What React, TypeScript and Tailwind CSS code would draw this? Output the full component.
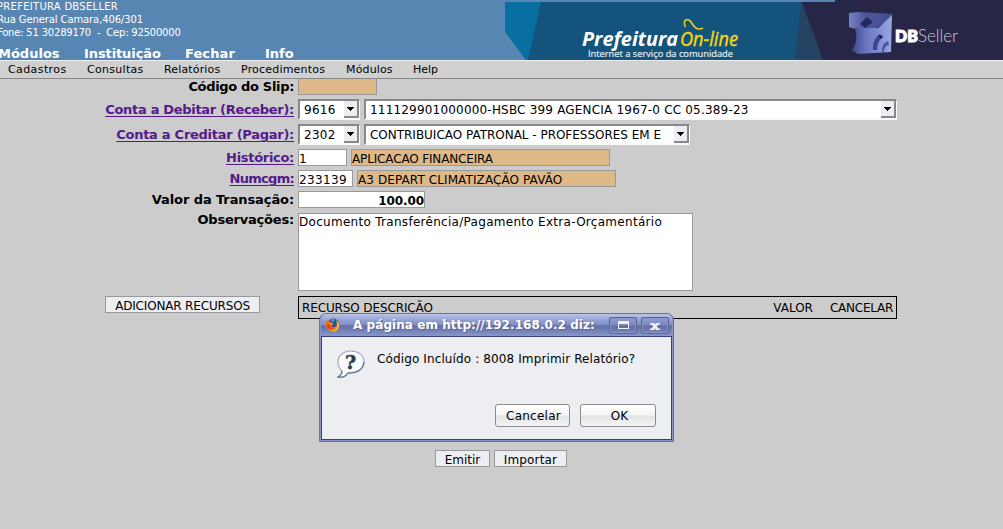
import type { ReactNode } from "react";

const field = "h-[17px] border border-[#999] text-[12px] leading-[19px] whitespace-pre overflow-hidden";
const button = "flex h-[17px] items-center justify-center border border-[#999] bg-[#edeef2] pt-[3px] text-[12px] leading-[15px] whitespace-nowrap";

function Row({ label, link, className, labelClass, children }: { label: string; link?: boolean; className: string; labelClass: string; children: ReactNode }) {
  return (
    <div className={`flex gap-1 ${className}`}>
      <div className={`w-[294px] shrink-0 text-right text-[13px] font-bold leading-[17px] whitespace-nowrap ${labelClass}`}>
        {link ? <a className="text-[#551a8b] underline decoration-1 underline-offset-2">{label}</a> : label}
      </div>
      {children}
    </div>
  );
}

function Select({ value, className }: { value: string; className: string }) {
  return (
    <div className={`flex h-[21px] justify-between border border-t-2 border-l-2 border-b-2 border-t-[#888] border-l-[#888] border-r-[#fafafa] border-b-[#fafafa] bg-white pl-1 text-[12px] leading-[18px] ${className}`}>
      <span className="whitespace-nowrap">{value}</span>
      <div className="flex h-[17px] w-[15px] shrink-0 items-center justify-center border-r-2 border-b-2 border-[#888] bg-[#ebedf2]">
        <svg width="7" height="4" viewBox="0 0 7 4" shapeRendering="crispEdges"><path d="M0 0h7v1H6v1H5v1H4v1H3V3H2V2H1V1H0z" /></svg>
      </div>
    </div>
  );
}

function Header() {
  return (
    <header className="relative h-[60px] overflow-hidden bg-[#5786b2] text-white">
      <div className="-ml-[3px] whitespace-pre text-[10px] leading-[13px]">
        <div className="tracking-[0.28px]">PREFEITURA DBSELLER</div>
        <div className="tracking-[-0.1px]">Rua General Camara,406/301</div>
        <div className="tracking-[-0.2px]">Fone: 51 30289170  -  Cep: 92500000</div>
      </div>
      <nav className="mt-[6px] -ml-[2px] flex text-[13px] font-bold leading-[17px]">
        <span className="w-[86px]">Módulos</span>
        <span className="w-[101px] tracking-[-0.1px]">Instituição</span>
        <span className="w-[80px] tracking-[0.1px]">Fechar</span>
        <span>Info</span>
      </nav>
      <svg className="absolute top-0 right-0" width="498" height="60" viewBox="505 0 498 60">
        <defs>
          <linearGradient id="top" x1="0" y1="0" x2="1" y2="0">
            <stop offset="0" stopColor="#7781c4" /><stop offset=".35" stopColor="#4d579d" /><stop offset="1" stopColor="#434b8c" />
          </linearGradient>
          <linearGradient id="base" x1="0" y1="0" x2="1" y2="0">
            <stop offset="0" stopColor="#3c4688" /><stop offset=".35" stopColor="#6975c2" /><stop offset="1" stopColor="#98a6e6" />
          </linearGradient>
        </defs>
        <path d="M505 2H835V0H1003V60H526L505 31z" fill="#14547c" />
        <path d="M505 2H541L528 60H526L505 31z" fill="#086fa0" />
        <path d="M802 2H835V0H1003V60H795z" fill="#282647" />
        <path d="M802 2L823 60H795z" fill="#254463" />
        <g fontFamily="'Open Sans', sans-serif">
          <text x="582" y="45.5" fontSize="19.5" fontWeight="700" fontStyle="italic" fill="white" textLength="96" lengthAdjust="spacingAndGlyphs">Prefeitura</text>
          <text x="680" y="45.5" fontSize="19.5" fontStyle="italic" fill="#f4d80b" stroke="#f4d80b" strokeWidth=".4" textLength="58" lengthAdjust="spacingAndGlyphs">On-line</text>
          <text x="588" y="56.5" fontSize="9.8" fill="#e3edf4" stroke="#e3edf4" strokeWidth=".2" textLength="145" lengthAdjust="spacingAndGlyphs">Internet a serviço da comunidade</text>
        </g>
        <path d="M685.5 27C682 20 688 17 691 22S697 31 703 28" fill="none" stroke="#e9d313" strokeWidth="1.6" />
        <path d="M849 13L857 12L893 14L889 18L874 30L855 29L849 27z" fill="url(#top)" />
        <path d="M855 28Q859 41 852 50L858 54L891 52L892 15L878 28z" fill="url(#base)" />
        <path d="M867 17L873 22L865 28L860 24z" fill="#252763" />
        <path d="M873 50Q872 39 880 34L883 37Q877 41 877 50z" fill="#3c458f" />
        <path d="M878 35l5 1l-2 3z" fill="#1d1c50" />
        <path d="M882 52Q881 44 888 41L889 45Q884 46 884 52z" fill="#4d57a3" />
        <text x="895" y="41.5" fontSize="17.5" fontWeight="800" fill="white" stroke="white" strokeWidth=".9" fontFamily="Lato, sans-serif" textLength="23" lengthAdjust="spacingAndGlyphs">DB</text>
        <text x="918" y="41.5" fontSize="18" fontWeight="300" fill="#c7c6d4" fontFamily="Lato, sans-serif" textLength="40" lengthAdjust="spacingAndGlyphs">Seller</text>
      </svg>
    </header>
  );
}

function Dialog() {
  const action = "flex h-[23px] items-center justify-center rounded-[3px] border border-[#8c8c8c] bg-[linear-gradient(#fff,#f4f4f4_48%,#e3e3e3_52%,#f4f4f4)] text-[12px]";
  const control = "flex h-[17px] w-[28px] items-center justify-center rounded-[2px] border border-[#5c6594] bg-[linear-gradient(#8d9bd0,#7c8abf_45%,#606da5_55%,#7886bb)] shadow-[inset_0_0_0_1px_#8794c4]";
  return (
    <div role="dialog" className="absolute top-[313px] left-[319px] flex h-[129px] w-[355px] flex-col rounded-t-[7px] border border-[#6970ad] bg-[#8793c9] px-px pb-px">
      <div className="flex h-[22px] items-center rounded-t-[5px] bg-[linear-gradient(#bac5e8,#8b99cd_35%,#8896ca_45%,#606fa8_55%,#8997c8)] pl-[5px] text-[12px] font-bold text-white [text-shadow:1px_1px_0_#5d6796]">
        <svg width="14" height="14" viewBox="0 0 14 14">
          <circle cx="7" cy="7" r="6.5" fill="#e57816" />
          <circle cx="7.5" cy="5.5" r="5" fill="#254f91" />
          <path d="M6 1Q8 0 9 2L7 4L5 3z" fill="#4e9bd4" />
          <path d="M1 2L3 4Q5 3 6 5L8 6L5 8Q8 11 11 7L11 3Q15 8 11 12T2 11T1 2" fill="#f27c19" />
          <path d="M10 2Q15 7 11 12Q8 14 5 13Q13 12 11 6z" fill="#ffd22c" />
          <path d="M1 5Q3 5 4 8T8 10Q5 13 1 9z" fill="#d63d1c" />
        </svg>
        <span className="ml-[13px] flex-1 whitespace-nowrap leading-[18px] tracking-[0.06px]">A página em http://192.168.0.2 diz:</span>
        <div className={control}><svg width="11" height="8" viewBox="0 0 11 8" shapeRendering="crispEdges"><path d="M.5 .5h10v7H.5z" fill="none" stroke="#eef0f6" /><path d="M0 0h11v3H0z" fill="#eef0f6" /></svg></div>
        <div className={`mr-[3px] ml-[4px] ${control}`}><svg className="mt-[2px]" width="10" height="7" viewBox="0 0 10 7"><path d="M0 0h4l1 1.5L6 0h4v1.5H8.5L6.8 3.5l1.7 2H10V7H6L5 5.5L4 7H0V5.5h1.5l1.7-2l-1.7-2H0z" fill="#eef0f6" /></svg></div>
      </div>
      <div className="flex flex-1 flex-col border border-[#37417b] bg-[#edeef2] text-[12px]">
        <div className="flex h-[67px] items-start pt-[13px] pl-[15px]">
          <svg width="28" height="29" viewBox="0 0 28 29">
            <path d="M14 1C6 1 1 6 1 12c0 5 2 7 4 9 0 3-2 5-4 6 5 1 8-1 10-4 9 1 16-4 16-11S21 1 14 1z" fill="#fafafa" stroke="#9fa5ad" strokeWidth="1.1" />
            <path d="M27 12c-1 8-8 11-16 11-2 3-5 5-10 4 2-1 4-3 4-6" fill="none" stroke="#547087" strokeWidth="1.2" />
            <text x="13.5" y="18.5" textAnchor="middle" fontFamily="'DejaVu Serif', serif" fontWeight="700" fontSize="19" fill="#263d50" stroke="#263d50" strokeWidth=".5">?</text>
          </svg>
          <span className="ml-[12px] leading-[18px] whitespace-nowrap tracking-[0.12px]">Código Incluído : 8008 Imprimir Relatório?</span>
        </div>
        <div className="flex justify-end gap-[10px] pr-[15px]">
          <button className={`w-[75px] pl-[2px] tracking-[0.25px] ${action}`}>Cancelar</button>
          <button className={`w-[76px] pl-[3px] ${action}`}>OK</button>
        </div>
      </div>
    </div>
  );
}

export default function App() {
  return (
    <div className="relative h-[529px] w-[1003px] overflow-hidden bg-[#ccc] font-['DejaVu_Sans',sans-serif] text-black">
      <Header />
      <nav className="flex h-[19px] border-t border-b border-t-[#eee] border-b-[#888] bg-[#d0d0d0] pl-2 text-[11px] leading-[17px]">
        <span className="w-[79px] tracking-[0.4px]">Cadastros</span><span className="w-[77px] tracking-[0.3px]">Consultas</span><span className="w-[77px] tracking-[0.15px]">Relatórios</span>
        <span className="w-[105px] tracking-[0.2px]">Procedimentos</span><span className="w-[67px] tracking-[0.15px]">Módulos</span><span>Help</span>
      </nav>
      <main>
        <Row label="Código do Slip:" className="h-[20px]" labelClass="-mt-px tracking-[-0.33px]"><div className="h-[16px] w-[79px] border border-t-0 border-[#999] bg-[#deb887]" /></Row>
        <Row label="Conta a Debitar (Receber):" link className="h-[25px]" labelClass="pt-[2px] tracking-[-0.31px]">
          <Select value="9616" className="w-[62px] tracking-[0.3px]" /><Select value="111129901000000-HSBC 399 AGENCIA 1967-0 CC 05.389-23" className="w-[533px] tracking-[0.19px]" />
        </Row>
        <Row label="Conta a Creditar (Pagar):" link className="h-[25px]" labelClass="pt-[2px] tracking-[-0.27px]">
          <Select value="2302" className="w-[62px] tracking-[0.3px]" /><Select value="CONTRIBUICAO PATRONAL - PROFESSORES EM E" className="w-[326px] tracking-[-0.02px]" />
        </Row>
        <Row label="Histórico:" link className="h-[21px]" labelClass="tracking-[-0.3px]">
          <div className={`${field} w-[49px] bg-white`}>1</div><div className={`${field} w-[259px] bg-[#deb887] tracking-[-0.15px]`}>APLICACAO FINANCEIRA</div>
        </Row>
        <Row label="Numcgm:" link className="h-[21px]" labelClass="tracking-[-0.7px]">
          <div className={`${field} w-[55px] bg-white tracking-[0.35px]`}>233139</div><div className={`${field} w-[259px] bg-[#deb887] tracking-[0.1px]`}>A3 DEPART CLIMATIZAÇÃO PAVÃO</div>
        </Row>
        <Row label="Valor da Transação:" className="h-[22px]" labelClass="tracking-[-0.1px]"><div className={`${field} w-[127px] bg-white text-right font-bold tracking-[-0.1px]`}>100.00</div></Row>
        <Row label="Observações:" className="h-[83px]" labelClass="-mt-[2px] tracking-[-0.2px]">
          <div className="h-[78px] w-[395px] border border-[#999] bg-white text-[12px] leading-[16px] tracking-[0.29px]">Documento Transferência/Pagamento Extra-Orçamentário</div>
        </Row>
        <div className="flex pl-[105px]">
          <button className={`${button} w-[155px] tracking-[-0.17px]`}>ADICIONAR RECURSOS</button>
          <div className="ml-[38px] flex h-[23px] w-[599px] border border-black px-[3px] text-[12px] leading-[22px]">
            <span className="flex-1 tracking-[-0.12px]">RECURSO DESCRIÇÃO</span><span className="mr-[17px]">VALOR</span><span className="tracking-[-0.25px]">CANCELAR</span>
          </div>
        </div>
        <div className="mt-[131px] flex gap-1 pl-[435px]">
          <button className={`${button} w-[55px]`}>Emitir</button>
          <button className={`${button} w-[73px] tracking-[0.15px]`}>Importar</button>
        </div>
      </main>
      <Dialog />
    </div>
  );
}
